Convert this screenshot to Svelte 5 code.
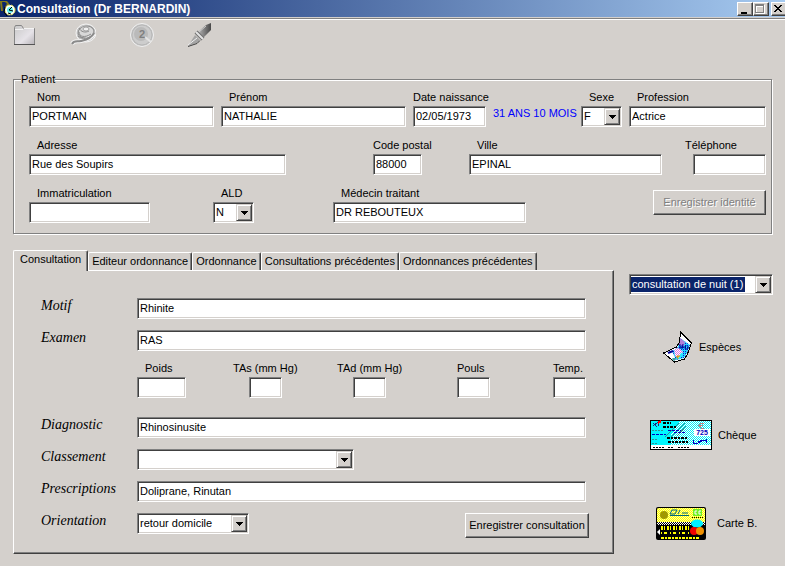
<script lang="ts">
  const tabs: string[] = [
    "Consultation",
    "Editeur ordonnance",
    "Ordonnance",
    "Consultations précédentes",
    "Ordonnances précédentes"
  ];

  let activeTab = $state(0);
  let sexe = $state("F");
  let ald = $state("N");
  let classement = $state("");
  let orientation = $state("retour domicile");
  let acte = $state("consultation de nuit (1)");
</script>

{#snippet arrow()}
  <span class="drop" aria-hidden="true">
    <svg width="7" height="4" viewBox="0 0 7 4" shape-rendering="crispEdges">
      <path d="M0 0h7v1h-1v1h-1v1h-1v1h-1v-1h-1v-1h-1v-1h-1z" />
    </svg>
  </span>
{/snippet}

<header class="titlebar">
  <svg class="app-icon" width="16" height="16" viewBox="0 0 16 16" aria-hidden="true">
    <path d="M0 1c3-2 7-1 8 2l-2 3M1 1l1 9" fill="none" stroke="#807818" stroke-width="2" />
    <circle cx="10" cy="9" r="5" fill="#fff" stroke="#e8e85a" stroke-dasharray="3 1" />
    <circle cx="10" cy="9" r="3" fill="#5ff0f0" />
    <path d="M12 6l-3 3 4 1M8 12l3 1" fill="none" stroke="#000" />
    <path d="M5 6l-1 5 3 4" fill="none" stroke="#000" />
  </svg>
  <h1>Consultation (Dr BERNARDIN)</h1>
  <div class="window-buttons">
    <button aria-label="Réduire">
      <svg width="12" height="10" viewBox="0 0 12 10" shape-rendering="crispEdges"><path d="M3 8h6v2h-6z" /></svg>
    </button>
    <button aria-label="Agrandir" disabled>
      <svg width="12" height="10" viewBox="0 0 12 10" shape-rendering="crispEdges">
        <path d="M2 1h9v9h-9z" fill="#fff" />
        <path d="M1 0h9v9h-9z" fill="#808080" />
        <path d="M2 2h7v6h-7z" fill="#fff" />
        <path d="M3 3h6v5h-6z" fill="#d4d0cc" />
      </svg>
    </button>
    <button class="close" aria-label="Fermer">
      <svg width="12" height="10" viewBox="0 0 12 10" shape-rendering="crispEdges">
        <path d="M2 1h2v1h1v1h2v-1h1v-1h2v1h-1v1h-1v1h-1v1h1v1h1v1h1v1h-2v-1h-1v-1h-2v1h-1v1h-2v-1h1v-1h1v-1h1v-1h-1v-1h-1v-1h-1z" />
      </svg>
    </button>
  </div>
</header>

<nav class="toolbar">
  <button aria-label="Ouvrir">
    <svg width="26" height="26" viewBox="0 0 26 26">
      <defs>
        <linearGradient id="folder" x2="1" y2="1">
          <stop offset="0" stop-color="#c8c8c8" /><stop offset="0.600" stop-color="#e6e3e8" /><stop offset="1" stop-color="#b8b4b8" />
        </linearGradient>
      </defs>
      <path d="M2.500 21.500v-17l1-2h6l2 3h11v16z" fill="url(#folder)" stroke="#858585" />
      <path d="M3 6.500h8l1-1h10" fill="none" stroke="#f4f4f4" />
      <path d="M2 21.500h21" stroke="#555" />
    </svg>
  </button>
  <button aria-label="Examen">
    <svg width="26" height="26" viewBox="0 0 26 26">
      <ellipse cx="16" cy="10" rx="10" ry="9" fill="#c6c6c6" stroke="#f4f4f4" />
      <ellipse cx="16" cy="9" rx="8" ry="6" fill="#d8d8d8" stroke="#8c8c8c" transform="rotate(-12 16 9)" />
      <path d="M2 21c2-4 5-2 9-3s10-2 13-7" fill="none" stroke="#f2f2f2" stroke-width="4" />
      <path d="M2 21c2-4 5-2 9-3s10-2 13-8" fill="none" stroke="#8a8a8a" stroke-width="2" />
      <path d="M9 9c0 5 6 6 12 2M9 5c2 4 6 5 10 3M8 13c3 3 8 3 12 1" fill="none" stroke="#8a8a8a" />
      <ellipse cx="16" cy="6" rx="3" ry="2" fill="#f0f0f0" stroke="#a0a0a0" />
    </svg>
  </button>
  <button aria-label="Tarif">
    <svg width="26" height="26" viewBox="0 0 26 26">
      <circle cx="14" cy="12" r="11.500" fill="#c6c6c6" stroke="#f0f0f0" />
      <circle cx="14" cy="12" r="10" fill="#cdcdcd" stroke="#b8b8b8" />
      <circle cx="13" cy="11" r="7" fill="#bababa" />
      <path d="M17 14l6 5" stroke="#e4e4e4" stroke-width="2" />
      <text x="14" y="15" text-anchor="middle" class="coin">2</text>
    </svg>
  </button>
  <button aria-label="Rédiger">
    <svg width="26" height="26" viewBox="0 0 26 26">
      <defs>
        <linearGradient id="pen"><stop offset="0" stop-color="#b4b4b4" /><stop offset="1" stop-color="#484848" /></linearGradient>
      </defs>
      <path d="M12 9l8-7 5-2v7l-8 8z" fill="url(#pen)" />
      <path d="M13 9l7-6" stroke="#ccc" />
      <path d="M10 9l7 7" stroke="#707070" stroke-width="4" />
      <path d="M10 9l7 7" stroke="#e4e4e4" stroke-width="2" />
      <path d="M9 12l5 5-3 3-9 3z" fill="#a4a4a4" />
      <path d="M2 23.500l9-3 3-3" fill="none" stroke="#444" />
      <path d="M2 22l9-7" stroke="#f0f0f0" />
    </svg>
  </button>
</nav>

<main>
  <fieldset class="patient">
    <legend>Patient</legend>
    <div class="row identity">
      <div class="field">
        <label for="nom">Nom</label>
        <input id="nom" value="PORTMAN" />
      </div>
      <div class="field">
        <label for="prenom">Prénom</label>
        <input id="prenom" value="NATHALIE" />
      </div>
      <div class="field flush">
        <label for="naissance">Date naissance</label>
        <input id="naissance" value="02/05/1973" />
      </div>
      <output class="age" for="naissance">31 ANS 10 MOIS</output>
      <div class="field">
        <label for="sexe">Sexe</label>
        <div class="combo">
          <select id="sexe" bind:value={sexe}>
            <option>F</option>
            <option>M</option>
          </select>
          {@render arrow()}
        </div>
      </div>
      <div class="field">
        <label for="profession">Profession</label>
        <input id="profession" value="Actrice" />
      </div>
    </div>

    <div class="row address">
      <div class="field">
        <label for="adresse">Adresse</label>
        <input id="adresse" value="Rue des Soupirs" />
      </div>
      <div class="field flush">
        <label for="cp">Code postal</label>
        <input id="cp" value="88000" />
      </div>
      <div class="field">
        <label for="ville">Ville</label>
        <input id="ville" value="EPINAL" />
      </div>
      <div class="field flush phone">
        <label for="tel">Téléphone</label>
        <input id="tel" type="tel" />
      </div>
    </div>

    <div class="row care">
      <div class="field">
        <label for="immat">Immatriculation</label>
        <input id="immat" />
      </div>
      <div class="field">
        <label for="ald">ALD</label>
        <div class="combo">
          <select id="ald" bind:value={ald}>
            <option>N</option>
            <option>O</option>
          </select>
          {@render arrow()}
        </div>
      </div>
      <div class="field">
        <label for="medecin">Médecin traitant</label>
        <input id="medecin" value="DR REBOUTEUX" />
      </div>
      <button class="push save-identity" disabled>Enregistrer identité</button>
    </div>
  </fieldset>

  <div class="lower">
    <section>
      <div class="tabs" role="tablist">
        {#each tabs as tab, i}
          <button role="tab" aria-selected={i === activeTab} class:active={i === activeTab} onclick={() => (activeTab = i)}>
            {tab}
          </button>
        {/each}
      </div>
      <div class="panel" role="tabpanel">
        <label class="caption" for="motif">Motif</label>
        <input id="motif" value="Rhinite" />
        <label class="caption" for="examen">Examen</label>
        <input id="examen" value="RAS" />

        <div class="vitals">
          <div class="field weight">
            <label for="poids">Poids</label>
            <input id="poids" />
          </div>
          <div class="field flush pressure">
            <label for="tas">TAs (mm Hg)</label>
            <input id="tas" />
          </div>
          <div class="field flush pressure">
            <label for="tad">TAd (mm Hg)</label>
            <input id="tad" />
          </div>
          <div class="field flush">
            <label for="pouls">Pouls</label>
            <input id="pouls" />
          </div>
          <div class="field flush">
            <label for="temp">Temp.</label>
            <input id="temp" />
          </div>
        </div>

        <label class="caption" for="diagnostic">Diagnostic</label>
        <input id="diagnostic" value="Rhinosinusite" />
        <label class="caption" for="classement">Classement</label>
        <div class="combo classement">
          <select id="classement" bind:value={classement}>
            <option value=""></option>
          </select>
          {@render arrow()}
        </div>
        <label class="caption" for="prescriptions">Prescriptions</label>
        <input id="prescriptions" value="Doliprane, Rinutan" />
        <label class="caption" for="orientation">Orientation</label>
        <div class="last-line">
          <div class="combo orientation">
            <select id="orientation" bind:value={orientation}>
              <option>retour domicile</option>
              <option>hospitalisation</option>
            </select>
            {@render arrow()}
          </div>
          <button class="push save-visit">Enregistrer consultation</button>
        </div>
      </div>
    </section>

    <aside>
      <div class="combo acte">
        <select aria-label="Type de consultation" bind:value={acte}>
          <option>consultation de nuit (1)</option>
          <option>consultation</option>
        </select>
        {@render arrow()}
      </div>

      <button class="pay cash">
        <svg width="30" height="32" viewBox="0 0 30 32">
          <defs>
            <pattern id="blueDots" width="2" height="2" patternUnits="userSpaceOnUse" shape-rendering="crispEdges">
              <path d="M0 0h2v2h-2z" fill="#20d8ff" /><path d="M0 0h1v1h-1z" fill="#1818c8" />
            </pattern>
            <pattern id="pinkDots" width="2" height="2" patternUnits="userSpaceOnUse" shape-rendering="crispEdges">
              <path d="M0 0h2v2h-2z" fill="#fff" /><path d="M0 0h1v1h-1zM1 1h1v1h-1z" fill="#e070e0" />
            </pattern>
          </defs>
          <path d="M17.500 1l11 11-4 11-3 5-10 3-11-9 13-6 3-5z" fill="#fff" />
          <path d="M17 7l10 7-3 8-3 5-8 2-4-9 6-4z" fill="url(#blueDots)" />
          <path d="M11 18l5-1 4 4-3 7-5-3z" fill="url(#pinkDots)" />
          <path d="M17 7l5 4-1 4-5-1z" fill="#b080d8" />
          <path d="M19 22l-3 6" stroke="#20f0ff" stroke-width="2" />
          <path d="M17 13v5M20 13l-1 5M23 14l-1 4h3v-3M17 16h6" stroke="#000098" fill="none" />
          <path d="M5 22l5-2" stroke="#000098" stroke-width="2" />
          <path d="M13 26l4-1M15 24v4" stroke="#e0a000" />
          <path d="M11 27v3M9 28h4" stroke="#008080" />
          <path d="M17.500 1l11 11-4 11-3 5-10 3-11-9 13-6 3-5z" fill="none" stroke="#000" shape-rendering="crispEdges" />
        </svg>
        Espèces
      </button>

      <button class="pay">
        <svg width="62" height="30" viewBox="0 0 62 30" shape-rendering="crispEdges">
          <defs>
            <pattern id="cyanDots" width="2" height="2" patternUnits="userSpaceOnUse">
              <path d="M0 0h2v2h-2z" fill="#fff" /><path d="M0 0h1v1h-1zM1 1h1v1h-1z" fill="#00f0f8" />
            </pattern>
          </defs>
          <path d="M0 0h62v30h-62z" />
          <path d="M1 1h60v25h-60z" fill="url(#cyanDots)" />
          <path d="M1 1h29l-9 14v11h-20z" fill="#00f8ff" />
          <path d="M1 25h60v4h-60z" fill="#fff" />
          <path d="M15 17l14-14M21 17l14-14M27 16l9-10" stroke="#309090" />
          <path d="M2 10.500h11M2 19.500h6M2 23.500h6" stroke="#309090" stroke-dasharray="2 1" />
          <path d="M2 14.500h14M18 10.500h13M24 12.500h11" stroke="#0000c0" stroke-dasharray="3 1" />
          <path d="M3 6l5-4 1 4M3 3l4 4" stroke="#202080" fill="none" />
          <path d="M8 3l3-2" stroke="#f00" stroke-width="2" />
          <path d="M13 3h8M13 7h13M17 18h21M18 22h20" stroke="#000" stroke-width="2" stroke-dasharray="3 1 2 1" />
          <path d="M3 27.500h12M18 27.500h6M28 27.500h12" stroke="#000" stroke-dasharray="2 1" />
          <path d="M54 3h-3l-2 2 2 3h3M48 5.500h5" stroke="#c08080" fill="none" />
          <path d="M44 9h16v7h-16z" fill="#fff" />
          <text x="52" y="15" text-anchor="middle" class="amount">725</text>
          <path d="M43 20v3l4 1 5-4-4 2 8-2v3" stroke="#0000c0" fill="none" />
        </svg>
        Chèque
      </button>

      <button class="pay card">
        <svg width="50" height="33" viewBox="0 0 50 33">
          <defs>
            <pattern id="yellowDots" width="2" height="2" patternUnits="userSpaceOnUse" shape-rendering="crispEdges">
              <path d="M0 0h2v2h-2z" fill="#ff0" /><path d="M0 0h1v1h-1zM1 1h1v1h-1z" fill="#ffffa0" />
            </pattern>
            <pattern id="blackDots" width="2" height="2" patternUnits="userSpaceOnUse" shape-rendering="crispEdges">
              <path d="M0 0h2v2h-2z" fill="#fff" /><path d="M0 0h1v1h-1zM1 1h1v1h-1z" />
            </pattern>
          </defs>
          <rect width="50" height="33" rx="2" />
          <path d="M2 1h46l1 1v14h-48v-14z" fill="url(#yellowDots)" />
          <path d="M1 15h48v3h-48z" fill="url(#blackDots)" />
          <circle cx="8" cy="8" r="4" fill="#a09800" />
          <path d="M14 7l2-4h5l-2 4zM22 7l2-4M26 6h6M14 8.500h19" stroke="#006878" fill="none" />
          <path d="M37 2h9v7h-9z" fill="#70f020" />
          <path d="M41 4h-2v3h2M45 4h-2v3h2" stroke="#fff" fill="none" />
          <path d="M36 10.500h11" stroke="#000" stroke-dasharray="1 1" />
          <path d="M5 20h29M5 22h28" stroke="#ff0" stroke-width="2" stroke-dasharray="2 1 1 2" />
          <path d="M5 26h29" stroke="#ff0" stroke-width="2" stroke-dasharray="1 2 3 3" />
          <path d="M5 31h38" stroke="#ff0" stroke-width="2" stroke-dasharray="3 1 2 1" />
          <ellipse cx="41" cy="16.500" rx="6" ry="4" fill="#00f0ff" />
          <circle cx="38" cy="24" r="4" fill="#f00000" />
          <circle cx="44" cy="24" r="4" fill="#f09000" />
          <path d="M1 25l3-3v6z" fill="#fff" />
        </svg>
        Carte B.
      </button>
    </aside>
  </div>
</main>

<style>
  :global(body) {
    margin: 0;
    background: #d4d0cc;
    color: #000;
    font: 11px/13px "Liberation Sans", Arial, sans-serif;
  }

  button,
  input,
  select {
    box-sizing: border-box;
    margin: 0;
    font: inherit;
    color: inherit;
    border-radius: 0;
  }

  button {
    background: #d4d0cc;
    padding: 0;
    border: 0;
  }

  svg {
    display: block;
    flex: none;
  }

  /* title bar */
  .titlebar {
    display: flex;
    align-items: center;
    height: 17px;
    background: linear-gradient(to right, #0a246a, #a6caf0);
    border-bottom: 1px solid #d4d0cc;
    box-shadow: 0 1px #808080, 0 2px #fff;
    overflow: hidden;
  }

  h1 {
    flex: 1;
    margin: 0;
    padding-left: 1px;
    font: bold 12px/16px "Liberation Sans", Arial, sans-serif;
    color: #fff;
  }

  .window-buttons {
    display: flex;
    margin-right: -2px;
  }

  .window-buttons button {
    width: 16px;
    height: 14px;
    border: 1px solid;
    border-color: #fff #404040 #404040 #fff;
    box-shadow: inset -1px -1px #808080;
  }

  .window-buttons .close {
    margin-left: 2px;
  }

  /* toolbar */
  .toolbar {
    display: flex;
    gap: 32px;
    padding: 5px 12px 0;
  }

  .toolbar button {
    height: 26px;
  }

  .coin {
    font: bold 11px "Liberation Sans", sans-serif;
    fill: #808080;
  }

  .amount {
    font: bold 7px "Liberation Sans", sans-serif;
    fill: #0000c0;
  }

  main {
    padding: 24px 12px 11px 13px;
  }

  /* patient */
  .patient {
    margin: 0 1px 0 0;
    padding: 5px 5px 10px 15px;
    border: 1px solid #808080;
    box-shadow: inset 1px 1px #fff, 1px 1px #fff;
    min-width: 0;
  }

  legend {
    margin-left: -8px;
    padding: 0;
    background: #d4d0cc;
  }

  .row {
    display: grid;
  }

  .row + .row {
    margin-top: 12px;
  }

  .identity {
    grid-template-columns: 185fr 185fr 73fr 81fr 41fr 137fr;
    column-gap: 7px;
  }

  .address {
    grid-template-columns: 257fr 87fr 49fr 47fr 193fr 23fr 81fr;
  }

  .care {
    grid-template-columns: 121fr 63fr 41fr 79fr 193fr 127fr 113fr;
  }

  .address > :nth-child(2),
  .care > :nth-child(2) {
    grid-column: 3;
  }

  .address > :nth-child(3),
  .care > :nth-child(3) {
    grid-column: 5;
  }

  .address > :nth-child(4),
  .care > :nth-child(4) {
    grid-column: 7;
  }

  .field {
    display: flex;
    flex-direction: column;
    gap: 2px;
    min-width: 0;
  }

  .field label {
    padding-left: 8px;
    white-space: nowrap;
  }

  .flush label {
    padding-left: 0;
  }

  .phone input {
    align-self: flex-end;
    width: 73px;
  }

  .age {
    align-self: end;
    min-width: 0;
    padding-bottom: 7px;
    color: #0000ff;
    white-space: nowrap;
  }

  input,
  .combo {
    width: 100%;
    min-width: 0;
    height: 21px;
    background: #fff;
    border: 1px solid;
    border-color: #808080 #fff #fff #808080;
    box-shadow: inset 1px 1px #404040, inset -1px -1px #d4d0cc;
  }

  input {
    padding: 0 2px 1px;
  }

  input:focus,
  select:focus {
    outline: none;
  }

  .combo {
    box-sizing: border-box;
    position: relative;
    padding: 1px;
  }

  .combo select {
    appearance: none;
    display: block;
    width: 100%;
    height: 17px;
    padding: 0 16px 0 1px;
    border: 0;
    background: transparent;
  }

  .drop {
    position: absolute;
    top: 1px;
    right: 1px;
    bottom: 1px;
    display: flex;
    align-items: center;
    justify-content: center;
    width: 16px;
    box-sizing: border-box;
    background: #d4d0cc;
    border: 1px solid;
    border-color: #d4d0cc #404040 #404040 #d4d0cc;
    box-shadow: inset 1px 1px #fff, inset -1px -1px #808080;
    pointer-events: none;
  }

  .push {
    height: 25px;
    white-space: nowrap;
    border: 1px solid;
    border-color: #fff #404040 #404040 #fff;
    box-shadow: inset -1px -1px #808080;
  }

  .push:disabled {
    color: #808080;
    text-shadow: 1px 1px #fff;
  }

  .save-identity {
    margin-top: 3px;
  }

  /* tabs and panel */
  .lower {
    display: grid;
    grid-template-columns: 601fr 144fr;
    column-gap: 15px;
    margin-top: 16px;
  }

  .tabs {
    display: flex;
    align-items: flex-end;
  }

  .tabs button {
    height: 18px;
    padding: 0 3px;
    white-space: nowrap;
    border: solid;
    border-width: 1px 1px 0;
    border-color: #fff #404040 #fff #fff;
    border-radius: 2px 2px 0 0;
    box-shadow: inset -1px 0 #808080;
  }

  .tabs .active {
    position: relative;
    height: 21px;
    margin-bottom: -1px;
    padding: 0 6px 3px;
  }

  .panel {
    display: grid;
    grid-template-columns: 96px 1fr;
    row-gap: 11px;
    padding: 27px 27px 15px 27px;
    border: 1px solid;
    border-color: #fff #404040 #404040 #fff;
    box-shadow: inset -1px -1px #808080;
  }

  .caption {
    font: italic 14px/16px "Liberation Serif", "Times New Roman", serif;
  }

  .vitals {
    grid-column: 2;
    display: grid;
    grid-template-columns: 96fr 104fr 120fr 96fr 33fr;
    margin-bottom: 8px;
  }

  .vitals input {
    width: 33px;
  }

  .vitals .weight input {
    width: 49px;
  }

  .vitals .pressure input {
    margin-left: 16px;
  }

  .classement {
    width: 217px;
  }

  .last-line {
    display: flex;
    justify-content: space-between;
    margin-right: -3px;
  }

  .orientation {
    width: 112px;
  }

  .save-visit {
    width: 124px;
  }

  /* billing */
  aside {
    display: flex;
    flex-direction: column;
    align-items: flex-start;
    padding-top: 24px;
  }

  .acte select {
    color: #fff;
    background: linear-gradient(#0a246a, #0a246a) 0 center / 114px 15px no-repeat;
  }

  .acte option {
    color: #000;
  }

  .pay {
    display: flex;
    align-items: center;
    gap: 6px;
    height: 34px;
    margin: 54px 0 0 21px;
  }

  .acte + .pay {
    margin-top: 35px;
  }

  .cash {
    margin-left: 34px;
  }

  .card {
    gap: 11px;
    margin-left: 27px;
  }
</style>
